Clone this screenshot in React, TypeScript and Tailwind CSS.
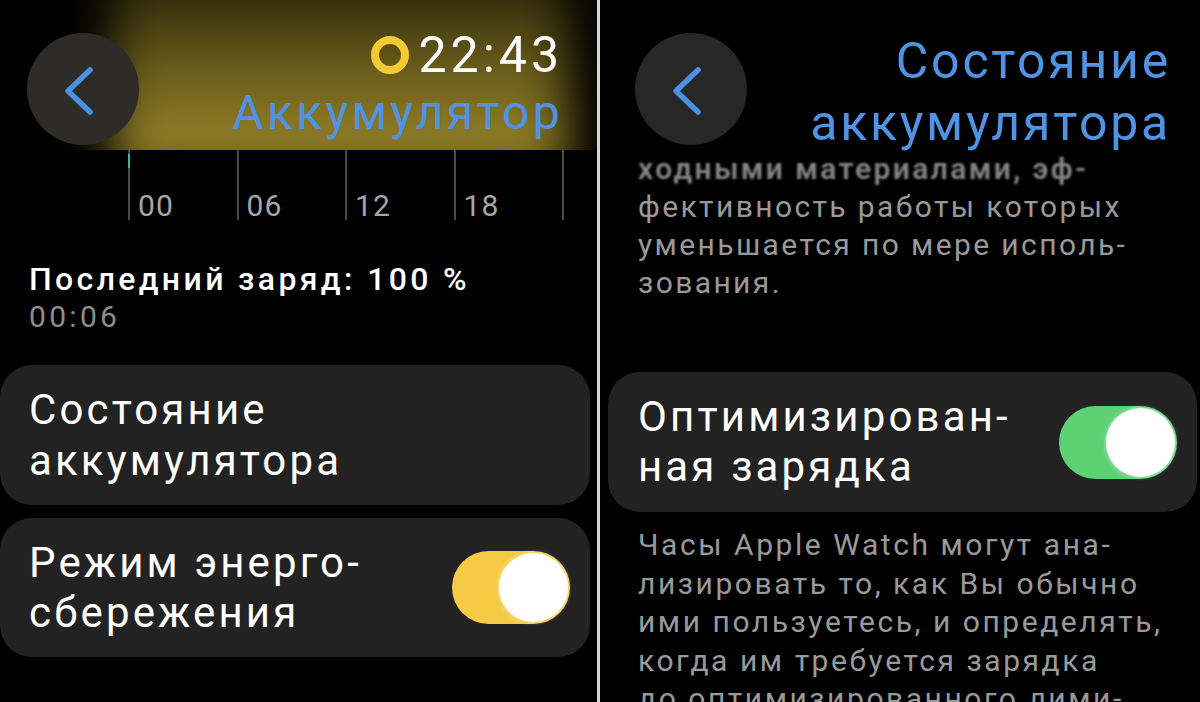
import React from 'react';

const font = { fontFamily: 'Roboto, "Noto Sans", sans-serif' };

const BackButton = ({ tone }: { tone: string }) => (
  <div className={`flex h-[112px] w-[112px] shrink-0 items-center justify-center rounded-full ${tone}`}>
    <svg width="112" height="112" viewBox="0 0 112 112" fill="none">
      <path d="M63 37 L41 58 L63 79" stroke="#4b91e3" strokeWidth="5.5" strokeLinecap="round" strokeLinejoin="round" />
    </svg>
  </div>
);

const Toggle = ({ track }: { track: string }) => (
  <div className={`flex h-[73px] w-[118px] shrink-0 items-center justify-end rounded-full p-[2px] ${track}`}>
    <div className="h-[69px] w-[69px] rounded-full bg-white shadow-[0_0_4px_rgba(255,255,255,0.6)]" />
  </div>
);

const LeftScreen = () => (
  <section className="relative h-full w-[597px] shrink-0 overflow-hidden bg-black">
    {/* blurred chart bar behind the header */}
    <div className="absolute left-0 top-0 h-[150px] w-full overflow-hidden">
      <div className="absolute left-[112px] top-[-40px] h-[215px] w-[455px] bg-gradient-to-b from-[#1c1806] via-[#6a5c1a] to-[#a48f2c] blur-[24px]" />
    </div>

    <header className="relative flex h-[150px] items-start justify-between pl-[27px] pr-[34px] pt-[33px]">
      <BackButton tone="bg-[#2d2c29]" />
      <div className="-mt-[3px] flex flex-col items-end">
        <div className="flex items-center gap-[9px]">
          <div className="h-[38px] w-[38px] rounded-full border-[8px] border-[#f3c935]" />
          <span className="text-[50px] leading-[50px] tracking-[0.08em] text-white">22:43</span>
        </div>
        <h1 className="mt-[5px] text-[48px] leading-[56px] tracking-[0.07em] text-[#4f94e4]">Аккумулятор</h1>
      </div>
    </header>

    <div className="ml-[128px] flex h-[70px] w-[436px]">
      {['00', '06', '12', '18'].map((t, i) => (
        <div key={t} className={`relative flex-1 border-l-2 border-[#4a4a4a] pl-[8px] pt-[42px] ${i === 3 ? 'border-r-2' : ''}`}>
          {i === 0 && <div className="absolute -left-[2px] top-[4px] h-[14px] w-[2px] bg-[#3fb59a]" />}
          <span className="text-[30px] leading-[28px] tracking-[0.04em] text-[#a6a6a6]">{t}</span>
        </div>
      ))}
    </div>

    <div className="mt-[40px] pl-[29px]">
      <p className="text-[32px] font-medium leading-[38px] tracking-[0.105em] text-white">Последний заряд: 100 %</p>
      <p className="text-[30px] leading-[38px] tracking-[0.11em] text-[#8d8d8d]">00:06</p>
    </div>

    <div className="mt-[29px] flex w-[590px] flex-col gap-[13px]">
      <div className="flex h-[140px] items-center rounded-[32px] bg-[#222222] pl-[29px]">
        <p className="text-[42px] leading-[51px] tracking-[0.075em] text-white">
          Состояние
          <br />
          аккумулятора
        </p>
      </div>
      <div className="flex h-[139px] items-center justify-between rounded-[32px] bg-[#222222] pl-[29px] pr-[20px]">
        <p className="text-[42px] leading-[50px] tracking-[0.075em] text-white">
          Режим энерго-
          <br />
          сбережения
        </p>
        <Toggle track="bg-[#f5cb46]" />
      </div>
    </div>
  </section>
);

const RightScreen = () => (
  <section className="relative h-full flex-1 overflow-hidden bg-black">
    <header className="relative z-10 flex h-[152px] items-start justify-between pl-[35px] pr-[29px] pt-[33px]">
      <BackButton tone="bg-[#272727]" />
      <h1 className="-mt-[3px] text-right text-[50px] leading-[62px] tracking-[0.055em] text-[#4f94e4]">
        Состояние
        <br />
        аккумулятора
      </h1>
    </header>

    <div className="pl-[38px] text-[30px] leading-[38px] tracking-[0.08em] text-[#999999]">
      <p className="-mt-[2px] font-semibold text-[#858585] blur-[1px]">ходными материалами, эф-</p>
      <p>фективность работы которых</p>
      <p>уменьшается по мере исполь-</p>
      <p>зования.</p>
    </div>

    <div className="ml-[8px] mt-[70px] flex h-[140px] w-[589px] items-center justify-between rounded-[32px] bg-[#222222] pl-[30px] pr-[20px]">
      <p className="text-[42px] leading-[50px] tracking-[0.075em] text-white">
        Оптимизирован-
        <br />
        ная зарядка
      </p>
      <Toggle track="bg-[#5dd275]" />
    </div>

    <div className="mt-[14px] pl-[38px] text-[30px] leading-[38.5px] tracking-[0.085em] text-[#999999]">
      <p>Часы Apple Watch могут ана-</p>
      <p>лизировать то, как Вы обычно</p>
      <p>ими пользуетесь, и определять,</p>
      <p>когда им требуется зарядка</p>
      <p>до оптимизированного лими-</p>
    </div>
  </section>
);

export default function App() {
  return (
    <div className="flex h-[702px] w-[1200px] overflow-hidden bg-black" style={font}>
      <LeftScreen />
      <div className="h-full w-[3px] shrink-0 bg-[#d6d6d6]" />
      <RightScreen />
    </div>
  );
}
